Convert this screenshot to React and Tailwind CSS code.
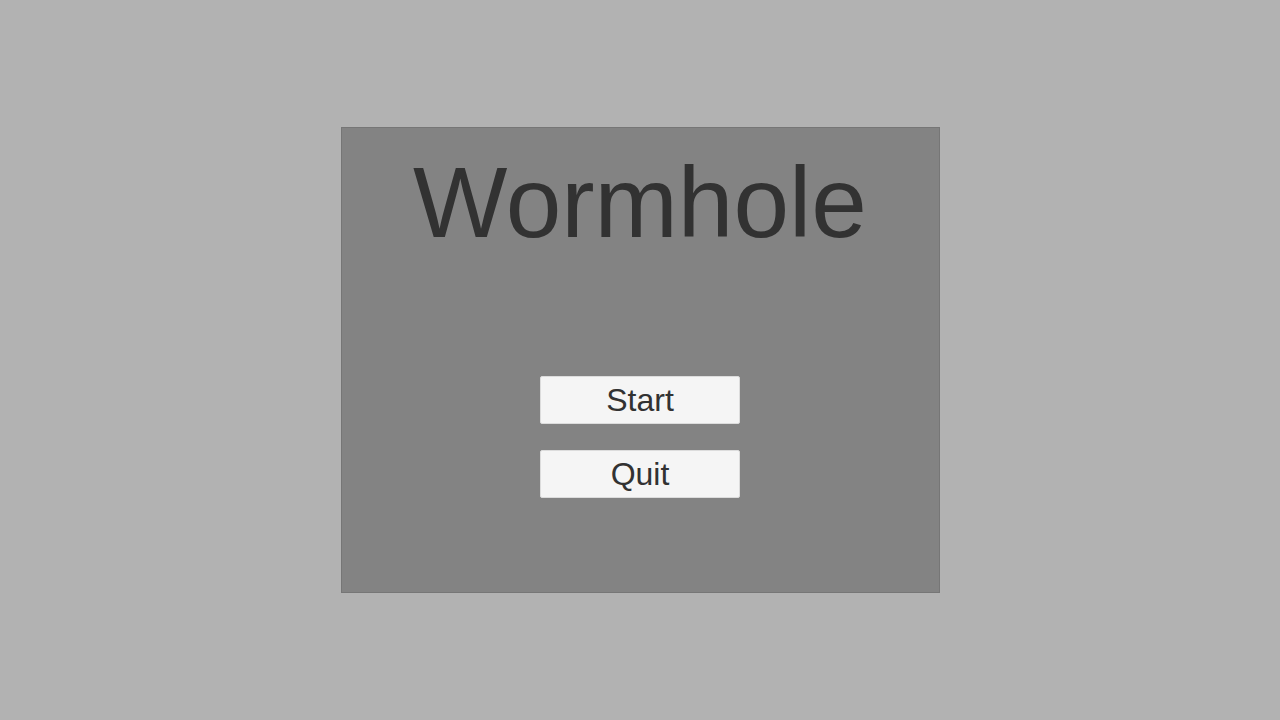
export default function App() {
  return (
    <div
      className="flex h-[720px] w-full items-center justify-center bg-[#b2b2b2]"
      style={{ fontFamily: '"Liberation Sans", Arial, sans-serif' }}
    >
      <div className="flex h-[466px] w-[599px] flex-col items-center border border-[#767676] bg-[#838383]">
        <h1 className="mt-[24px] text-[100px] leading-none text-[#323232]">Wormhole</h1>
        <div className="mt-[124px] flex flex-col gap-[26px]">
          <button className="h-[48px] w-[200px] rounded-[2px] border border-[#dcdcdc] bg-[#f5f5f5] text-[32px] leading-none text-[#323232]">
            Start
          </button>
          <button className="h-[48px] w-[200px] rounded-[2px] border border-[#dcdcdc] bg-[#f5f5f5] text-[32px] leading-none text-[#323232]">
            Quit
          </button>
        </div>
      </div>
    </div>
  );
}
